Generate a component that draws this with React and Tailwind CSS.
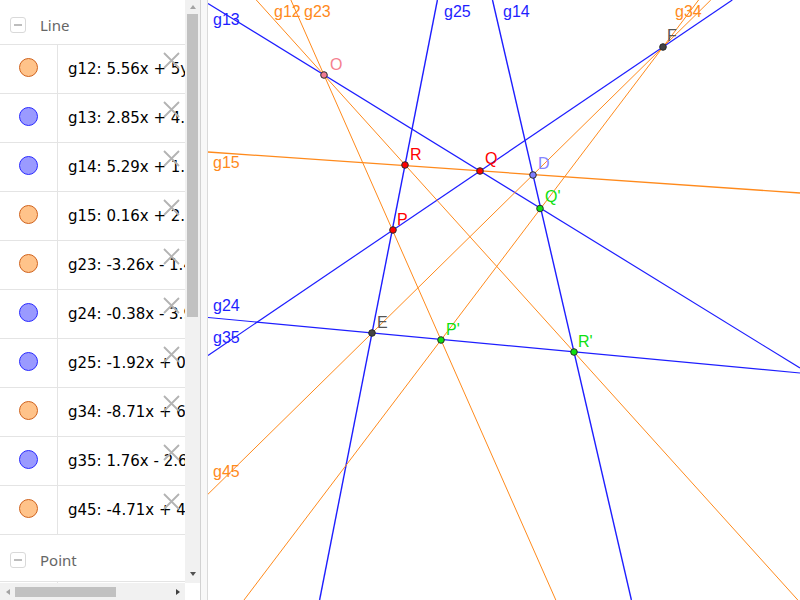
import React from "react";

const rows = [
  { text: "g12: 5.56x + 5y = 21.45", o: true },
  { text: "g13: 2.85x + 4.64y = 12.53", o: false },
  { text: "g14: 5.29x + 1.23y = 37.1", o: false },
  { text: "g15: 0.16x + 2.4y = 11.82", o: true },
  { text: "g23: -3.26x - 1.45y = -7.9", o: true },
  { text: "g24: -0.38x - 3.97y = 2.31", o: false },
  { text: "g25: -1.92x + 0.39y = -4.8", o: false },
  { text: "g34: -8.71x + 6.6y = -47.2", o: true },
  { text: "g35: 1.76x - 2.6y = 12.85", o: false },
  { text: "g45: -4.71x + 4.79y = 1.07", o: true },
];

const blue = "#1e1eff";
const orange = "#ff8a1c";

const lines = [
  // blue
  { x1: 208, y1: 3.5, x2: 800, y2: 368, c: blue, w: 1.2 },
  { x1: 208, y1: 317.5, x2: 800, y2: 373, c: blue, w: 1.2 },
  { x1: 208, y1: 355.4, x2: 732.3, y2: 0, c: blue, w: 1.2 },
  { x1: 437.4, y1: 0, x2: 319.6, y2: 600, c: blue, w: 1.4 },
  { x1: 492.5, y1: 0, x2: 631.4, y2: 600, c: blue, w: 1.4 },
  // orange
  { x1: 208, y1: 152, x2: 800, y2: 193, c: orange, w: 1.3 },
  { x1: 256.3, y1: 0, x2: 797.8, y2: 600, c: orange, w: 1 },
  { x1: 290.9, y1: 0, x2: 555.8, y2: 600, c: orange, w: 1 },
  { x1: 208, y1: 494.2, x2: 710.8, y2: 0, c: orange, w: 1 },
  { x1: 698.6, y1: 0, x2: 244, y2: 600, c: orange, w: 1 },
];

const lineLabels = [
  { t: "g13", x: 213, y: 25, c: blue },
  { t: "g12", x: 274, y: 17, c: orange },
  { t: "g23", x: 304, y: 17, c: orange },
  { t: "g25", x: 444, y: 17, c: blue },
  { t: "g14", x: 503, y: 17, c: blue },
  { t: "g34", x: 675, y: 17, c: orange },
  { t: "g15", x: 213, y: 168, c: orange },
  { t: "g24", x: 213, y: 311, c: blue },
  { t: "g35", x: 213, y: 343, c: blue },
  { t: "g45", x: 213, y: 477, c: orange },
];

const points = [
  { t: "O", x: 324, y: 75, f: "#ef7a92", lc: "#f5808f", lx: 330, ly: 70 },
  { t: "F", x: 663, y: 47, f: "#444444", lc: "#555555", lx: 667, ly: 41 },
  { t: "R", x: 405, y: 165, f: "#ff0000", lc: "#ff0000", lx: 410, ly: 160 },
  { t: "Q", x: 480, y: 171, f: "#ff0000", lc: "#ff0000", lx: 485, ly: 164 },
  { t: "D", x: 533, y: 175, f: "#7f7fff", lc: "#8585ff", lx: 538, ly: 169 },
  { t: "Q'", x: 540, y: 208.5, f: "#10e010", lc: "#10e010", lx: 545, ly: 202 },
  { t: "P", x: 393, y: 230, f: "#ff0000", lc: "#ff0000", lx: 397, ly: 225 },
  { t: "E", x: 372, y: 333, f: "#444444", lc: "#555555", lx: 377, ly: 328 },
  { t: "P'", x: 441, y: 340, f: "#10e010", lc: "#10e010", lx: 446, ly: 335 },
  { t: "R'", x: 574, y: 352, f: "#10e010", lc: "#10e010", lx: 578, ly: 347 },
];

function MinusBox() {
  return (
    <div className="flex h-4 w-4 items-center justify-center rounded-[3px] border border-[#d9d9d9]">
      <div className="h-[1.5px] w-2 bg-[#bdbdbd]" />
    </div>
  );
}

function Header({ label, h }) {
  return (
    <div className={`flex items-start border-b border-[#e4e4e4] pl-[10px] ${h}`}>
      <div className="flex items-center gap-[14px]">
        <MinusBox />
        <span className="text-[15px] leading-4 text-[#666]" style={{ fontFamily: "'Noto Sans', sans-serif" }}>
          {label}
        </span>
      </div>
    </div>
  );
}

function Row({ text, o }) {
  return (
    <div className="relative flex h-[49px] border-b border-[#e4e4e4]">
      <div className="flex w-[58px] shrink-0 items-center justify-center border-r border-[#e4e4e4] pb-[3px]">
        <div
          className={`h-[19px] w-[19px] rounded-full border ${
            o ? "border-[#d0621c] bg-[#ffc38a]" : "border-[#2a2aff] bg-[#9a9aff]"
          }`}
        />
      </div>
      <div
        className="flex items-center whitespace-nowrap pl-[10px] text-[15px] text-black"
        style={{ fontFamily: "'DejaVu Sans', sans-serif" }}
      >
        {text}
      </div>
      <svg className="absolute left-[163px] top-[7px]" width="17" height="17" viewBox="0 0 17 17">
        <path d="M1 1L16 16M16 1L1 16" stroke="#b3b3b3" strokeWidth="1.8" />
      </svg>
    </div>
  );
}

export default function App() {
  return (
    <div className="flex h-[600px] w-[800px] overflow-hidden bg-white">
      <div className="flex w-[200px] shrink-0 flex-col">
        <div className="flex min-h-0 flex-1">
          <div className="w-[185px] overflow-hidden">
            <Header label="Line" h="h-[45px] pt-[17px]" />
            {rows.map((r) => (
              <Row key={r.text} {...r} />
            ))}
            <Header label="Point" h="h-[47px] pt-[17px]" />
            <div className="flex h-[48px]">
              <div className="w-[58px] border-r border-[#e4e4e4]" />
            </div>
          </div>
          <div className="flex w-[15px] flex-col bg-[#f1f1f1]">
            <div className="flex h-[14px] items-center justify-center">
              <div className="h-0 w-0 border-x-[3.5px] border-b-[4px] border-x-transparent border-b-[#a3a3a3]" />
            </div>
            <div className="ml-[2px] h-[303px] w-[11px] bg-[#c1c1c1]" />
            <div className="flex-1" />
            <div className="flex h-[15px] items-center justify-center pb-[4px]">
              <div className="h-0 w-0 border-x-[3.5px] border-t-[4px] border-x-transparent border-t-[#505050]" />
            </div>
          </div>
        </div>
        <div className="flex h-[17px]">
          <div className="flex w-[185px] items-center bg-[#f1f1f1]">
            <div className="flex w-[15px] items-center justify-center">
              <div className="h-0 w-0 border-y-[3.5px] border-r-[4px] border-y-transparent border-r-[#a3a3a3]" />
            </div>
            <div className="h-[10px] w-[101px] bg-[#c1c1c1]" />
            <div className="flex-1" />
            <div className="flex w-[15px] items-center justify-center">
              <div className="h-0 w-0 border-y-[3.5px] border-l-[4px] border-y-transparent border-l-[#404040]" />
            </div>
          </div>
          <div className="flex-1 bg-white" />
        </div>
      </div>
      <div className="w-[8px] shrink-0 border-x border-l-[#d2d2d2] border-r-[#dadada] bg-[#f8f8f8]" />
      <svg width="592" height="600" viewBox="208 0 592 600" className="block shrink-0">
        {lines.map((l, i) => (
          <line key={i} x1={l.x1} y1={l.y1} x2={l.x2} y2={l.y2} stroke={l.c} strokeWidth={l.w} />
        ))}
        <g fontFamily="'Liberation Sans', Arial, sans-serif" fontSize="16">
          {lineLabels.map((l) => (
            <text key={l.t} x={l.x} y={l.y} fill={l.c}>
              {l.t}
            </text>
          ))}
          {points.map((p) => (
            <g key={p.t}>
              <circle cx={p.x} cy={p.y} r="3.3" fill={p.f} stroke="#2a2a2a" strokeWidth="1" />
              <text x={p.lx} y={p.ly} fill={p.lc}>
                {p.t}
              </text>
            </g>
          ))}
        </g>
      </svg>
    </div>
  );
}
